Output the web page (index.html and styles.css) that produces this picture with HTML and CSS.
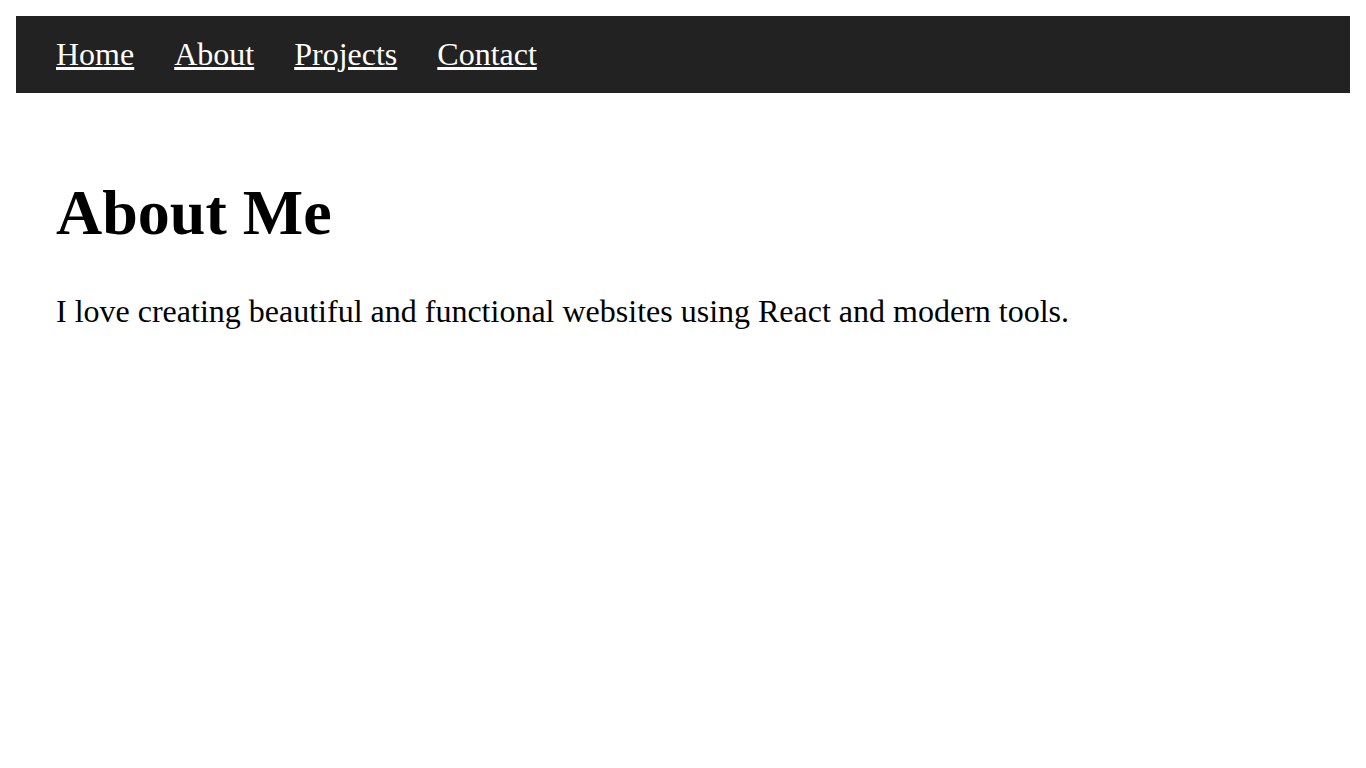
FILE: index.html
```html
<!DOCTYPE html>
<html lang="en">
<head>
<meta charset="utf-8">
<title>About Me</title>
<link rel="stylesheet" href="styles.css">
</head>
<body>
<nav class="navbar">
  <a class="nav-link" href="#">Home</a>
  <a class="nav-link" href="#">About</a>
  <a class="nav-link" href="#">Projects</a>
  <a class="nav-link" href="#">Contact</a>
</nav>
<main class="content">
  <h1 class="title">About Me</h1>
  <p class="text">I love creating beautiful and functional websites using React and modern tools.</p>
</main>
</body>
</html>
```
FILE: styles.css
```css
body {
  margin: 16px;
  font-family: "Liberation Serif", "Times New Roman", serif;
  font-size: 32px;
  color: #000;
  background: #fff;
}
.navbar {
  display: flex;
  gap: 40px;
  background: #222;
  padding: 20px 40px;
}
.nav-link {
  color: #fff;
  text-decoration: underline;
}
.content {
  padding: 40px;
}
.title {
  font-size: 64px;
  font-weight: bold;
  margin: 43px 0;
}
.text {
  font-size: 32px;
  margin: 32px 0;
}
```
